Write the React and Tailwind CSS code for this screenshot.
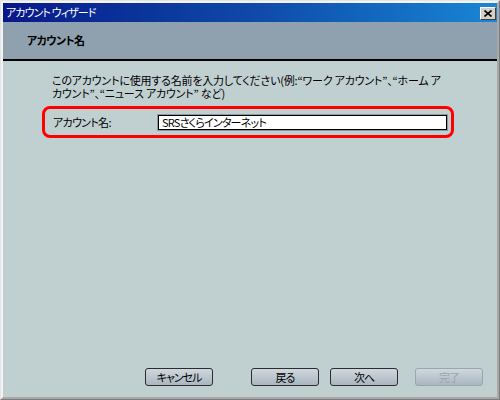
import React from 'react';

const jp = "font-['MS_UI_Gothic','Noto_Sans_CJK_JP',sans-serif] [font-feature-settings:'palt']";

function WizardButton({ children, disabled, className = '' }) {
    return (
        <button
            disabled={disabled}
            className={`h-[18px] w-[68px] rounded-[3px] border text-[11px] leading-none tracking-[-1px] bg-gradient-to-b from-[#d0d8de] to-[#aab6c0] ${disabled ? 'border-[#9aa6ae] text-[#9aa6ae]' : 'border-[#2c2c2c] text-black'} ${className}`}
        >
            {children}
        </button>
    );
}

export default function App() {
    return (
        <div className={`w-[500px] h-[400px] flex flex-col bg-[#c0c0c0] border border-t-[#e4e4e4] border-l-[#e4e4e4] border-r-[#7c7c7c] border-b-[#7c7c7c] ${jp}`}>
            <div className="flex flex-1 flex-col border-2 border-t-[#f4f4f4] border-l-[#f4f4f4] border-r-[#a8a8a8] border-b-[#a8a8a8]">
                {/* title bar */}
                <div className="relative flex h-[19px] items-center bg-gradient-to-r from-[#0a168a] via-[#1048a8] to-[#1a86d4] pl-[3px]">
                    <span className="text-[11px] leading-none tracking-[-0.9px] text-white">アカウント ウィザード</span>
                    <div className="absolute right-[1px] top-[4px] flex h-[13px] w-[16px] items-center justify-center border border-t-white border-l-white border-r-[#404040] border-b-[#404040] bg-[#d4d0c8]">
                        <svg width="8" height="7" viewBox="0 0 8 7">
                            <path d="M0.5 0.5 L7.5 6.5 M7.5 0.5 L0.5 6.5" stroke="black" strokeWidth="1.6" />
                        </svg>
                    </div>
                </div>

                {/* page header */}
                <div className="flex h-[39px] items-center border-b-2 border-black bg-[#8fa0ae] pl-[24px]">
                    <span className="text-[11px] font-bold leading-none tracking-[-0.6px] text-black">アカウント名</span>
                </div>

                {/* body */}
                <div className="flex flex-1 flex-col bg-[#c0cfd0]">
                    <p className="ml-[49px] mt-[13px] text-[11px] leading-[13px] tracking-[-0.2px] text-black">
                        このアカウントに使用する名前を入力してください(例:“ワーク アカウント”、“ホーム ア<br />
                        カウント”、“ニュース アカウント” など)
                    </p>

                    <div className="ml-[39px] mt-[6px] flex h-[32px] w-[412px] items-center rounded-[8px] border-[3px] border-[#ff0000] pl-[8px]">
                        <label className="w-[105px] text-[11px] leading-none tracking-[-0.7px] text-black">アカウント名:</label>
                        <div className="flex h-[15px] w-[289px] items-center border border-black bg-white pl-[3px] outline outline-1 outline-[#8a9aa4]">
                            <span className="text-[11px] leading-none tracking-[-0.8px] text-black">SRSさくらインターネット</span>
                        </div>
                    </div>

                    <div className="mb-[11px] mt-auto flex">
                        <WizardButton className="ml-[142px]">キャンセル</WizardButton>
                        <WizardButton className="ml-[38px]">戻る</WizardButton>
                        <WizardButton className="ml-[11px]">次へ</WizardButton>
                        <WizardButton disabled className="ml-[17px]">完了</WizardButton>
                    </div>
                </div>
            </div>
        </div>
    );
}
